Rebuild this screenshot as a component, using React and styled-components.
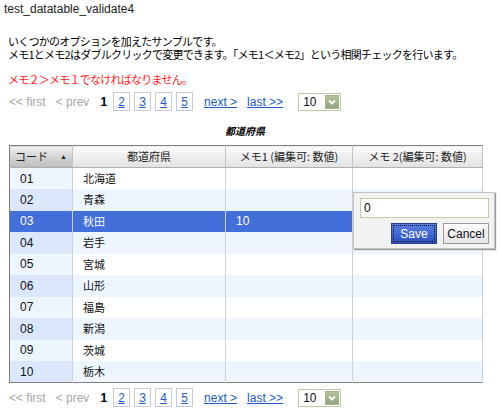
import React from 'react';
import styled, { createGlobalStyle } from 'styled-components';

const Global = createGlobalStyle`
  html, body {
    margin: 0;
    padding: 0;
    background: #fff;
  }
  body {
    font-family: "Liberation Sans", Arial, "Noto Sans CJK JP", sans-serif;
    font-size: 12px;
    color: #000;
  }
`;

const Page = styled.div`
  position: relative;
  width: 500px;
  height: 409px;
  overflow: hidden;
`;

const Title = styled.div`
  margin: 2px 0 0 4px;
  line-height: 14px;
  color: #222;
`;

const Desc = styled.div`
  margin: 19px 0 0 8px;
  font-family: "Noto Sans CJK JP", sans-serif;
  font-size: 11px;
  letter-spacing: -0.75px;
  white-space: nowrap;
`;

const Line = styled.div`
  height: 13px;
  line-height: 13px;
`;

const ErrorMsg = styled(Desc)`
  margin-top: 12px;
  height: 13px;
  line-height: 13px;
  color: #ff2020;
`;

const Pager = styled.div`
  display: flex;
  align-items: center;
  height: 19px;
  margin: ${p => p.$top}px 0 0 9px;
  font-size: 12px;
  white-space: nowrap;
`;

const Disabled = styled.span`
  color: #a6a6a6;
  margin-right: ${p => p.$mr}px;
`;

const Current = styled.span`
  font-weight: bold;
  margin-right: 6px;
`;

const PageBox = styled.a`
  display: inline-flex;
  align-items: center;
  justify-content: center;
  box-sizing: border-box;
  width: 17px;
  height: 19px;
  margin-right: 4px;
  border: 1px solid #c4ccd8;
  color: #2158c8;
  text-decoration: underline;
`;

const NavLink = styled.a`
  color: #2158c8;
  text-decoration: underline;
  margin-left: ${p => p.$ml}px;
`;

const Select = styled.div`
  display: flex;
  align-items: center;
  box-sizing: border-box;
  width: 43px;
  height: 18px;
  margin-left: 15px;
  border: 1px solid #bccaa4;
  background: #fff;
  padding-left: 4px;
  color: #111;
`;

const Arrow = styled.span`
  margin-left: auto;
  margin-right: 1px;
  width: 14px;
  height: 14px;
  display: flex;
  align-items: center;
  justify-content: center;
  background: linear-gradient(#b4c29c, #93a67c);
  border: 1px solid #a4b38c;
  box-sizing: border-box;
`;

const Caption = styled.div`
  margin-top: 14px;
  width: 490px;
  text-align: center;
  font-family: "Noto Sans CJK JP", sans-serif;
  font-size: 10px;
  font-style: italic;
  font-weight: bold;
  line-height: 12px;
`;

const Table = styled.table`
  margin: 8px 0 0 9px;
  width: 473px;
  border-collapse: collapse;
  border: 1px solid #808080;
  table-layout: fixed;
  font-size: 12px;
`;

const Th = styled.th`
  height: 21px;
  padding: 0;
  line-height: 14px;
  font-weight: normal;
  text-align: center;
  color: #222;
  border-right: 1px solid #c2c2c2;
  border-bottom: 1px solid #b0b0b0;
  background: ${p => p.$sorted
    ? 'linear-gradient(#f2f2f2 0%, #d6d6d6 45%, #bdbdbd 100%)'
    : 'linear-gradient(#fafafa 0%, #eeeeee 50%, #e2e2e2 100%)'};
  white-space: nowrap;
`;

const SortMark = styled.span`
  font-size: 7px;
  margin-left: 12px;
  vertical-align: 2px;
`;

const Tr = styled.tr`
  height: 21.5px;
`;

const Td = styled.td`
  padding: 0 0 0 10px;
  border-right: 1px solid #d0d0d0;
  line-height: 14px;
  color: ${p => (p.$sel ? '#fff' : '#111')};
  background: ${p => {
    if (p.$sel) return '#426fd9';
    if (p.$sorted) return p.$odd ? '#dbe8fc' : '#edf5ff';
    return p.$odd ? '#edf5ff' : '#fff';
  }};
`;

const Jp = styled.span`
  font-family: "Noto Sans CJK JP", sans-serif;
  font-size: 11px;
  line-height: 14px;
`;

const Editor = styled.div`
  position: absolute;
  left: 353px;
  top: 192px;
  width: 142px;
  height: 57px;
  box-sizing: border-box;
  background: #f2f2f2;
  border: 1px solid #c4c4c4;
  box-shadow: 1px 1px 1px #9a9a9a;
  padding: 5px 5px 0 6px;
`;

const Input = styled.div`
  box-sizing: border-box;
  height: 20px;
  border: 1px solid #c0cca8;
  background: #fff;
  padding-left: 3px;
  line-height: 18px;
  font-size: 12px;
`;

const Buttons = styled.div`
  display: flex;
  justify-content: flex-end;
  gap: 6px;
  margin-top: 5px;
`;

const Button = styled.div`
  box-sizing: border-box;
  height: 21px;
  width: ${p => p.$w}px;
  display: flex;
  align-items: center;
  justify-content: center;
  font-size: 12px;
  ${p => p.$primary
    ? `color: #fff;
       background: linear-gradient(#5a80e4, #2c52c4);
       border: 1px solid #27408c;
       outline: 1px dotted #111;
       outline-offset: -3px;`
    : `color: #111;
       background: linear-gradient(#fdfdfd, #e4e4e4);
       border: 1px solid #9a9a9a;`}
`;

const rows = [
  ['01', '北海道', ''],
  ['02', '青森', ''],
  ['03', '秋田', '10'],
  ['04', '岩手', ''],
  ['05', '宮城', ''],
  ['06', '山形', ''],
  ['07', '福島', ''],
  ['08', '新潟', ''],
  ['09', '茨城', ''],
  ['10', '栃木', ''],
];

const Paginator = ({ top }) => (
  <Pager $top={top}>
    <Disabled $mr={10}>&lt;&lt; first</Disabled>
    <Disabled $mr={11}>&lt; prev</Disabled>
    <Current>1</Current>
    {[2, 3, 4, 5].map(n => (
      <PageBox key={n}>{n}</PageBox>
    ))}
    <NavLink $ml={7}>next &gt;</NavLink>
    <NavLink $ml={10}>last &gt;&gt;</NavLink>
    <Select>
      10
      <Arrow>
        <svg width="8" height="6" viewBox="0 0 8 6">
          <path d="M1 1.5 L4 4.5 L7 1.5" stroke="#fff" strokeWidth="1.8" fill="none" />
        </svg>
      </Arrow>
    </Select>
  </Pager>
);

export default function App() {
  return (
    <Page>
      <Global />
      <Title>test_datatable_validate4</Title>
      <Desc>
        <Line>いくつかのオプションを加えたサンプルです。</Line>
        <Line>メモ1とメモ2はダブルクリックで変更できます。「メモ1＜メモ2」という相関チェックを行います。</Line>
      </Desc>
      <ErrorMsg>メモ２＞メモ１でなければなりません。</ErrorMsg>
      <Paginator top={6} />
      <Caption>都道府県</Caption>
      <Table>
        <colgroup>
          <col style={{ width: 63 }} />
          <col style={{ width: 153 }} />
          <col style={{ width: 127 }} />
          <col style={{ width: 130 }} />
        </colgroup>
        <thead>
          <tr>
            <Th $sorted>
              <Jp>コード</Jp>
              <SortMark>▲</SortMark>
            </Th>
            <Th><Jp>都道府県</Jp></Th>
            <Th><Jp>メモ1 (編集可: 数値)</Jp></Th>
            <Th><Jp>メモ 2(編集可: 数値)</Jp></Th>
          </tr>
        </thead>
        <tbody>
          {rows.map(([code, name, memo], i) => {
            const odd = i % 2 === 1;
            const sel = code === '03';
            return (
              <Tr key={code}>
                <Td $sorted $odd={odd} $sel={sel}>{code}</Td>
                <Td $odd={odd} $sel={sel}><Jp>{name}</Jp></Td>
                <Td $odd={odd} $sel={sel}>{memo}</Td>
                <Td $odd={odd} $sel={sel}></Td>
              </Tr>
            );
          })}
        </tbody>
      </Table>
      <Paginator top={5} />
      <Editor>
        <Input>0</Input>
        <Buttons>
          <Button $primary $w={46}>Save</Button>
          <Button $w={46}>Cancel</Button>
        </Buttons>
      </Editor>
    </Page>
  );
}
